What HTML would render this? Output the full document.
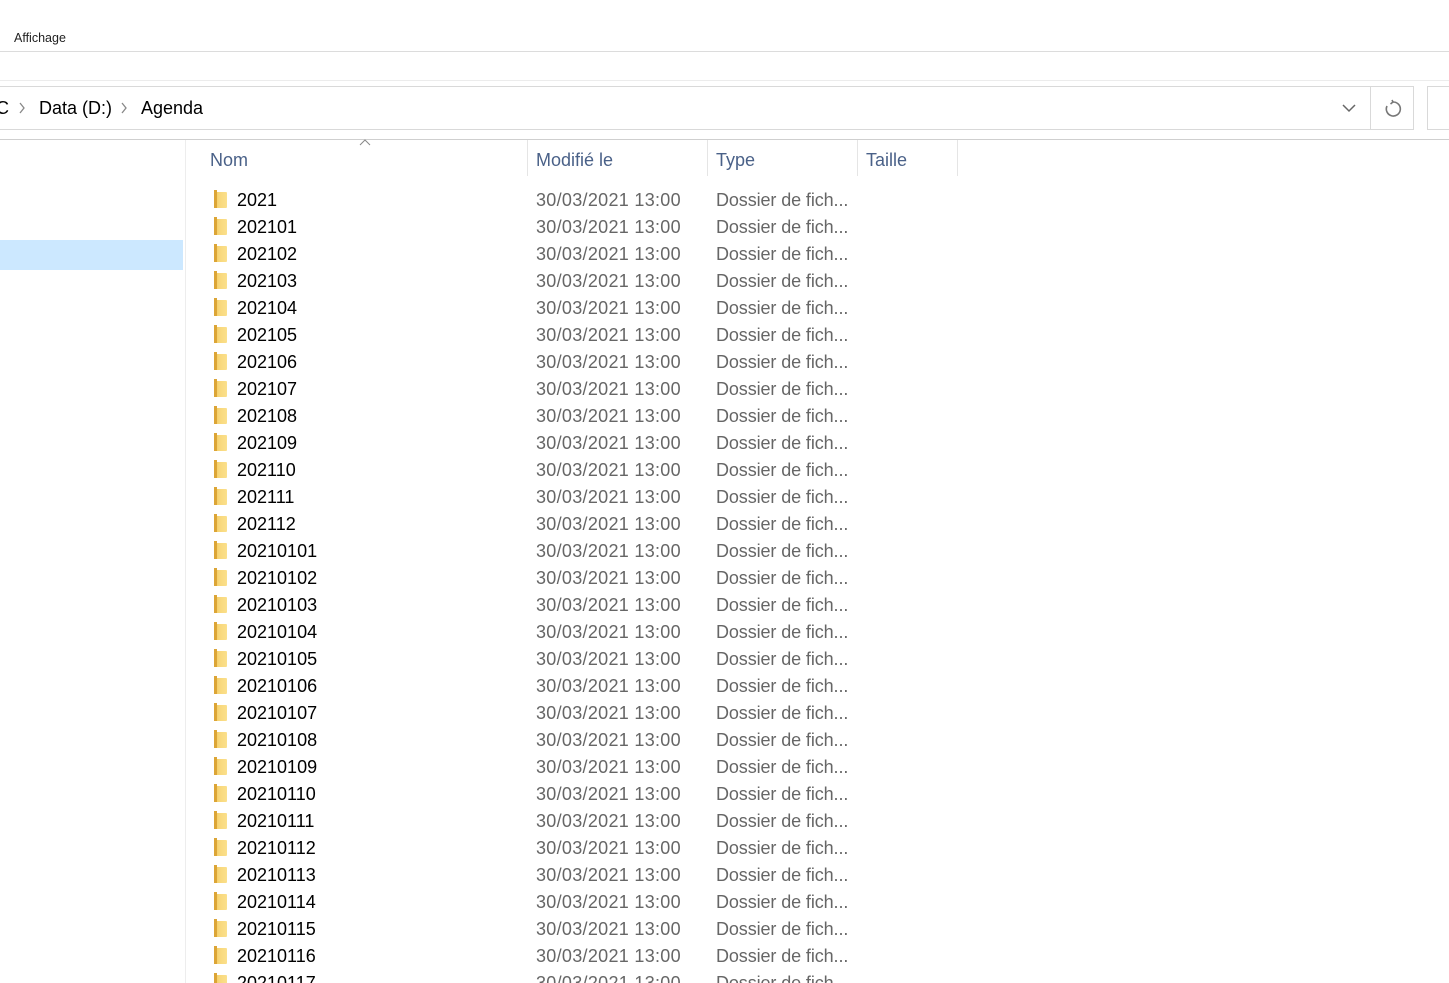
<!DOCTYPE html>
<html><head><meta charset="utf-8"><style>
*{margin:0;padding:0;box-sizing:border-box}
html,body{width:1449px;height:983px;overflow:hidden}
body{background:#fff;font-family:"Liberation Sans",sans-serif;position:relative;color:#000}
.a{position:absolute}
.row{position:absolute;left:0;height:27px;width:1000px;font-size:18px;line-height:27px}
.row .n{position:absolute;left:237px;color:#000}
.row .d{position:absolute;left:536px;color:#666;letter-spacing:0.3px}
.row .t{position:absolute;left:716px;color:#666;letter-spacing:-0.1px}
.row .f{position:absolute;left:214px;top:5px;width:13px;height:16px;background:linear-gradient(90deg,#f0c658 0,#f8d77a 40%,#fbe08c 100%);border-radius:1px}
.row .f:before{content:"";position:absolute;left:0;top:-2px;width:3px;height:18px;background:#dca536}
.h{font-size:18px;color:#4a6188;top:150px}
.sep{top:140px;width:1px;height:36px;background:#e5e5e5}
.chev{font-size:18px;color:#888}
</style></head><body>
<div class="a" style="left:14px;top:31px;font-size:12.5px;color:#222">Affichage</div>
<div class="a" style="left:0;top:51px;width:1449px;height:1px;background:#dcdcdc"></div>
<div class="a" style="left:0;top:80px;width:1449px;height:1px;background:#ececec"></div>
<div class="a" style="left:-2px;top:86px;width:1416px;height:44px;border:1px solid #d9d9d9"></div>
<div class="a" style="left:1370px;top:86px;width:1px;height:44px;background:#d9d9d9"></div>
<div class="a" style="left:1427px;top:86px;width:30px;height:44px;border:1px solid #d9d9d9"></div>
<div class="a" style="left:-4px;top:98px;font-size:18px">C</div>
<svg class="a" style="left:18px;top:102px" width="8" height="12"><path d="M2 1 L6 6 L2 11" stroke="#888" stroke-width="1.3" fill="none"/></svg>
<div class="a" style="left:39px;top:98px;font-size:18px">Data (D:)</div>
<svg class="a" style="left:120px;top:102px" width="8" height="12"><path d="M2 1 L6 6 L2 11" stroke="#888" stroke-width="1.3" fill="none"/></svg>
<div class="a" style="left:141px;top:98px;font-size:18px">Agenda</div>
<svg class="a" style="left:1342px;top:103px" width="14" height="10"><path d="M1 2 L7 8 L13 2" stroke="#666" stroke-width="1.5" fill="none"/></svg>
<svg class="a" style="left:1383px;top:99px" width="20" height="20"><path d="M10 3 A7 7 0 1 1 4 7" stroke="#777" stroke-width="1.6" fill="none"/><path d="M9 1 L10 3 L7.5 5" stroke="#777" stroke-width="1.6" fill="none"/></svg>
<div class="a" style="left:0;top:139px;width:1449px;height:1px;background:#cfcfcf"></div>
<div class="a" style="left:185px;top:140px;width:1px;height:843px;background:#ededed"></div>
<div class="a" style="left:0;top:240px;width:183px;height:30px;background:#cce8ff"></div>
<svg class="a" style="left:359px;top:139px" width="12" height="8"><path d="M1 6 L6 1 L11 6" stroke="#888" stroke-width="1" fill="none"/></svg>
<div class="a h" style="left:210px">Nom</div>
<div class="a h" style="left:536px">Modifié le</div>
<div class="a h" style="left:716px">Type</div>
<div class="a h" style="left:866px">Taille</div>
<div class="a sep" style="left:527px"></div>
<div class="a sep" style="left:707px"></div>
<div class="a sep" style="left:857px"></div>
<div class="a sep" style="left:957px"></div>
<div class="row" style="top:187px"><i class="f"></i><span class="n">2021</span><span class="d">30/03/2021 13:00</span><span class="t">Dossier de fich...</span></div>
<div class="row" style="top:214px"><i class="f"></i><span class="n">202101</span><span class="d">30/03/2021 13:00</span><span class="t">Dossier de fich...</span></div>
<div class="row" style="top:241px"><i class="f"></i><span class="n">202102</span><span class="d">30/03/2021 13:00</span><span class="t">Dossier de fich...</span></div>
<div class="row" style="top:268px"><i class="f"></i><span class="n">202103</span><span class="d">30/03/2021 13:00</span><span class="t">Dossier de fich...</span></div>
<div class="row" style="top:295px"><i class="f"></i><span class="n">202104</span><span class="d">30/03/2021 13:00</span><span class="t">Dossier de fich...</span></div>
<div class="row" style="top:322px"><i class="f"></i><span class="n">202105</span><span class="d">30/03/2021 13:00</span><span class="t">Dossier de fich...</span></div>
<div class="row" style="top:349px"><i class="f"></i><span class="n">202106</span><span class="d">30/03/2021 13:00</span><span class="t">Dossier de fich...</span></div>
<div class="row" style="top:376px"><i class="f"></i><span class="n">202107</span><span class="d">30/03/2021 13:00</span><span class="t">Dossier de fich...</span></div>
<div class="row" style="top:403px"><i class="f"></i><span class="n">202108</span><span class="d">30/03/2021 13:00</span><span class="t">Dossier de fich...</span></div>
<div class="row" style="top:430px"><i class="f"></i><span class="n">202109</span><span class="d">30/03/2021 13:00</span><span class="t">Dossier de fich...</span></div>
<div class="row" style="top:457px"><i class="f"></i><span class="n">202110</span><span class="d">30/03/2021 13:00</span><span class="t">Dossier de fich...</span></div>
<div class="row" style="top:484px"><i class="f"></i><span class="n">202111</span><span class="d">30/03/2021 13:00</span><span class="t">Dossier de fich...</span></div>
<div class="row" style="top:511px"><i class="f"></i><span class="n">202112</span><span class="d">30/03/2021 13:00</span><span class="t">Dossier de fich...</span></div>
<div class="row" style="top:538px"><i class="f"></i><span class="n">20210101</span><span class="d">30/03/2021 13:00</span><span class="t">Dossier de fich...</span></div>
<div class="row" style="top:565px"><i class="f"></i><span class="n">20210102</span><span class="d">30/03/2021 13:00</span><span class="t">Dossier de fich...</span></div>
<div class="row" style="top:592px"><i class="f"></i><span class="n">20210103</span><span class="d">30/03/2021 13:00</span><span class="t">Dossier de fich...</span></div>
<div class="row" style="top:619px"><i class="f"></i><span class="n">20210104</span><span class="d">30/03/2021 13:00</span><span class="t">Dossier de fich...</span></div>
<div class="row" style="top:646px"><i class="f"></i><span class="n">20210105</span><span class="d">30/03/2021 13:00</span><span class="t">Dossier de fich...</span></div>
<div class="row" style="top:673px"><i class="f"></i><span class="n">20210106</span><span class="d">30/03/2021 13:00</span><span class="t">Dossier de fich...</span></div>
<div class="row" style="top:700px"><i class="f"></i><span class="n">20210107</span><span class="d">30/03/2021 13:00</span><span class="t">Dossier de fich...</span></div>
<div class="row" style="top:727px"><i class="f"></i><span class="n">20210108</span><span class="d">30/03/2021 13:00</span><span class="t">Dossier de fich...</span></div>
<div class="row" style="top:754px"><i class="f"></i><span class="n">20210109</span><span class="d">30/03/2021 13:00</span><span class="t">Dossier de fich...</span></div>
<div class="row" style="top:781px"><i class="f"></i><span class="n">20210110</span><span class="d">30/03/2021 13:00</span><span class="t">Dossier de fich...</span></div>
<div class="row" style="top:808px"><i class="f"></i><span class="n">20210111</span><span class="d">30/03/2021 13:00</span><span class="t">Dossier de fich...</span></div>
<div class="row" style="top:835px"><i class="f"></i><span class="n">20210112</span><span class="d">30/03/2021 13:00</span><span class="t">Dossier de fich...</span></div>
<div class="row" style="top:862px"><i class="f"></i><span class="n">20210113</span><span class="d">30/03/2021 13:00</span><span class="t">Dossier de fich...</span></div>
<div class="row" style="top:889px"><i class="f"></i><span class="n">20210114</span><span class="d">30/03/2021 13:00</span><span class="t">Dossier de fich...</span></div>
<div class="row" style="top:916px"><i class="f"></i><span class="n">20210115</span><span class="d">30/03/2021 13:00</span><span class="t">Dossier de fich...</span></div>
<div class="row" style="top:943px"><i class="f"></i><span class="n">20210116</span><span class="d">30/03/2021 13:00</span><span class="t">Dossier de fich...</span></div>
<div class="row" style="top:970px"><i class="f"></i><span class="n">20210117</span><span class="d">30/03/2021 13:00</span><span class="t">Dossier de fich...</span></div>
</body></html>
